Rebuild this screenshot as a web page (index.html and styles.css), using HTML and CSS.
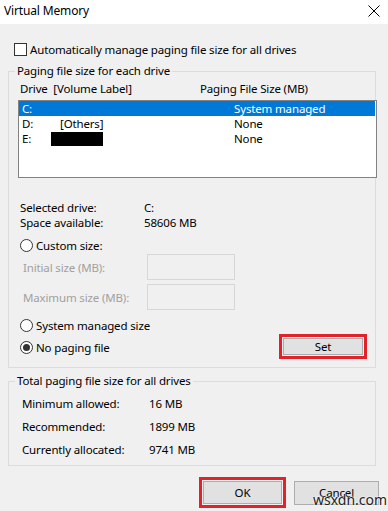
FILE: index.html
```html
<!DOCTYPE html>
<html>
<head>
<meta charset="utf-8">
<link rel="stylesheet" href="styles.css">
</head>
<body>
<div class="window">
  <div class="titlebar">
    <span class="title">Virtual Memory</span>
    <svg class="close" width="12" height="12" viewBox="0 0 12 12"><path d="M0.5 0.5 L11.5 11.5 M11.5 0.5 L0.5 11.5" stroke="#000" stroke-width="1" fill="none"/></svg>
  </div>
  <div class="content">
    <div class="auto-row"><span class="checkbox"></span><span>Automatically manage paging file size for all drives</span></div>

    <fieldset class="group group-drives">
      <legend>Paging file size for each drive</legend>
      <div class="list-header"><span>Drive&nbsp; [Volume Label]</span><span>Paging File Size (MB)</span></div>
      <div class="listbox">
        <div class="list-row selected"><span>C:</span><span></span><span>System managed</span></div>
        <div class="list-row"><span>D:</span><span class="vol">[Others]</span><span>None</span></div>
        <div class="list-row"><span>E:</span><span><span class="redact"></span></span><span>None</span></div>
      </div>

      <div class="info">
        <span>Selected drive:</span><span>C:</span>
        <span>Space available:</span><span>58606 MB</span>
      </div>

      <div class="radio-row custom"><span class="radio"></span><span>Custom size:</span></div>
      <div class="size-row first"><span class="disabled">Initial size (MB):</span><span class="textbox"></span></div>
      <div class="size-row"><span class="disabled">Maximum size (MB):</span><span class="textbox"></span></div>
      <div class="radio-row sysman"><span class="radio"></span><span>System managed size</span></div>
      <div class="last-row">
        <div class="radio-row"><span class="radio checked"></span><span>No paging file</span></div>
        <span class="highlight"><span class="btn btn-set">Set</span></span>
      </div>
    </fieldset>

    <fieldset class="group group-total">
      <legend>Total paging file size for all drives</legend>
      <div class="totals">
        <span>Minimum allowed:</span><span>16 MB</span>
        <span>Recommended:</span><span>1899 MB</span>
        <span>Currently allocated:</span><span>9741 MB</span>
      </div>
    </fieldset>

    <div class="buttons">
      <span class="highlight"><span class="btn btn-ok">OK</span></span>
      <span class="btn btn-cancel">Cancel</span>
    </div>
  </div>
  <div class="watermark">wsxdn.com</div>
</div>
</body>
</html>
```
FILE: styles.css
```css
* { box-sizing: border-box; }
html, body { margin: 0; padding: 0; }
body {
  background: #f0f0f0;
  font-family: "Noto Sans", "Open Sans", sans-serif;
  font-size: 11.5px;
  letter-spacing: -0.15px;
  color: #000;
  width: 388px;
  height: 511px;
  overflow: hidden;
}
.window { position: relative; width: 388px; height: 511px; }
.titlebar {
  height: 24px;
  background: #fff;
  display: flex;
  align-items: center;
  justify-content: space-between;
  padding: 0 8px 4px 4px;
}
.title { font-size: 12px; line-height: 15px; }
.close { display: block; margin-top: 2px; }

.content { display: flex; flex-direction: column; }

.auto-row {
  display: flex;
  align-items: center;
  gap: 3px;
  margin: 18px 0 0 14px;
  height: 15px;
  line-height: 15px;
}
.checkbox {
  width: 13px; height: 13px;
  border: 1px solid #333;
  background: #fff;
  display: inline-block;
}

.group {
  margin: 0 12px 0 8px;
  padding: 0;
  border: 1px solid #dcdcdc;
  min-width: 0;
}
.group legend {
  line-height: 14px;
  padding: 0 2px;
  margin-left: 6px;
}
.group-drives { margin-top: 7px; padding-bottom: 8px; }

.list-header {
  display: grid;
  grid-template-columns: 180px auto;
  padding-left: 11px;
  margin-top: 3px;
  line-height: 15px;
}
.listbox {
  margin: 4px 0 0 9px;
  width: 359px;
  height: 78px;
  border: 1px solid #828282;
  background: #fff;
}
.list-row {
  display: grid;
  grid-template-columns: 29px 183px auto;
  height: 15px;
  line-height: 15px;
  padding-left: 3px;
}
.list-row.selected { background: #0078d7; color: #fff; margin-right: 1px; }
.vol { padding-left: 9px; }
.redact {
  display: inline-block;
  width: 52px;
  height: 14px;
  background: #000;
  vertical-align: top;
  margin-top: 1px;
}

.info {
  display: grid;
  grid-template-columns: 124px auto;
  padding-left: 11px;
  margin-top: 22px;
  line-height: 15px;
}

.radio-row {
  display: flex;
  align-items: center;
  gap: 3px;
  height: 15px;
  line-height: 15px;
  padding-left: 11px;
}
.radio {
  width: 13px; height: 13px;
  border: 1px solid #333;
  border-radius: 50%;
  background: #fff;
  display: inline-flex;
  align-items: center;
  justify-content: center;
}
.radio.checked::after {
  content: "";
  width: 7px; height: 7px;
  border-radius: 50%;
  background: #333;
}
.custom { margin-top: 8px; }
.sysman { margin-top: 8px; }

.size-row {
  display: grid;
  grid-template-columns: 124px 88px;
  align-items: center;
  padding-left: 14px;
  margin-top: 4px;
  height: 26px;
}
.size-row.first { margin-top: 1px; }
.disabled { color: #a0a0a0; }
.textbox {
  height: 26px;
  border: 1px solid #d7d7d7;
  background: #f0f0f0;
}

.last-row {
  display: flex;
  align-items: center;
  justify-content: space-between;
  margin-top: 1px;
  padding-right: 8px;
}
.last-row .radio-row { margin-top: 2px; }

.highlight {
  display: inline-flex;
  border: 3px solid #e3212b;
  padding: 1px;
}
.btn {
  display: inline-flex;
  align-items: center;
  justify-content: center;
  background: #e1e1e1;
  border: 1px solid #adadad;
  line-height: 15px;
}
.btn-set { width: 80px; height: 17px; }
.btn-ok { width: 79px; height: 23px; }
.btn-cancel { width: 85px; height: 24px; align-items: flex-start; padding-top: 3px; }

.group-total { margin-top: 6px; padding-bottom: 8px; }
.totals {
  display: grid;
  grid-template-columns: 127px auto;
  row-gap: 8px;
  padding-left: 13px;
  margin-top: 8px;
  line-height: 15px;
}

.buttons {
  display: flex;
  justify-content: flex-end;
  align-items: center;
  gap: 8px;
  margin-top: 11px;
  padding-right: 9px;
}

.watermark {
  position: absolute;
  left: 313px;
  top: 492px;
  font-size: 14px;
  line-height: 16px;
  letter-spacing: 0;
  color: #222;
  text-shadow: 0 0 2px #fff, 0 0 2px #fff;
}
```
